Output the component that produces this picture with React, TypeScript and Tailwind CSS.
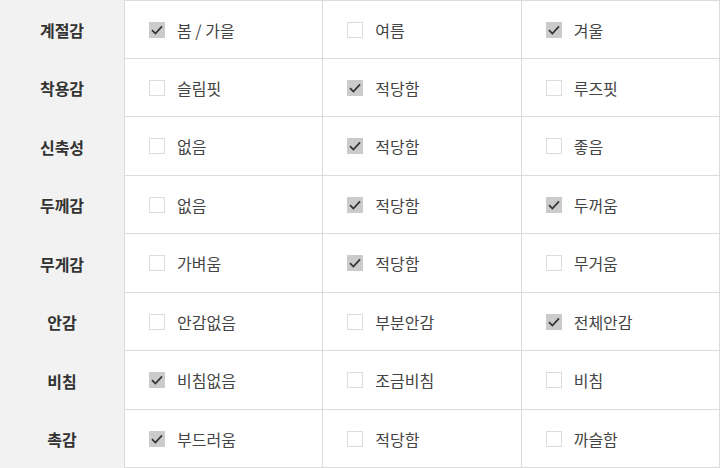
import React from 'react';

type Row = { label: string; options: [string, boolean][] };

const rows: Row[] = [
  { label: '계절감', options: [['봄 / 가을', true], ['여름', false], ['겨울', true]] },
  { label: '착용감', options: [['슬림핏', false], ['적당함', true], ['루즈핏', false]] },
  { label: '신축성', options: [['없음', false], ['적당함', true], ['좋음', false]] },
  { label: '두께감', options: [['없음', false], ['적당함', true], ['두꺼움', true]] },
  { label: '무게감', options: [['가벼움', false], ['적당함', true], ['무거움', false]] },
  { label: '안감', options: [['안감없음', false], ['부분안감', false], ['전체안감', true]] },
  { label: '비침', options: [['비침없음', true], ['조금비침', false], ['비침', false]] },
  { label: '촉감', options: [['부드러움', true], ['적당함', false], ['까슬함', false]] },
];

const Check: React.FC<{ on: boolean }> = ({ on }) =>
  on ? (
    <span className="w-4 h-4 bg-[#cbcbcb] flex items-center justify-center shrink-0">
      <svg width="14" height="12" viewBox="0 0 14 12">
        <path d="M2 6.2 L5.4 9.6 L12 2.4" fill="none" stroke="#333" strokeWidth="1.7" />
      </svg>
    </span>
  ) : (
    <span className="w-4 h-4 border border-[#dcdcdc] bg-white shrink-0" />
  );

const App: React.FC = () => {
  return (
    <div
      className="w-[720px] h-[468px] bg-white flex flex-col overflow-hidden"
      style={{ fontFamily: '"Noto Sans CJK KR", "Noto Sans", sans-serif' }}
    >
      {rows.map((row, i) => (
        <div key={i} className="flex h-[58.5px]">
          <div className="w-[125px] shrink-0 bg-[#f2f2f2] border-r border-[#dcdcdc] flex items-center justify-center text-[16px] font-bold text-[#333] pt-px">
            {row.label}
          </div>
          {row.options.map(([text, on], j) => (
            <div
              key={j}
              className={`flex-1 flex items-center gap-3 pl-6 pt-px text-[16px] text-[#444] border-[#dcdcdc] border-r border-b ${i === 0 ? 'border-t' : ''}`}
            >
              <Check on={on} />
              <span>{text}</span>
            </div>
          ))}
        </div>
      ))}
    </div>
  );
};

export default App;
